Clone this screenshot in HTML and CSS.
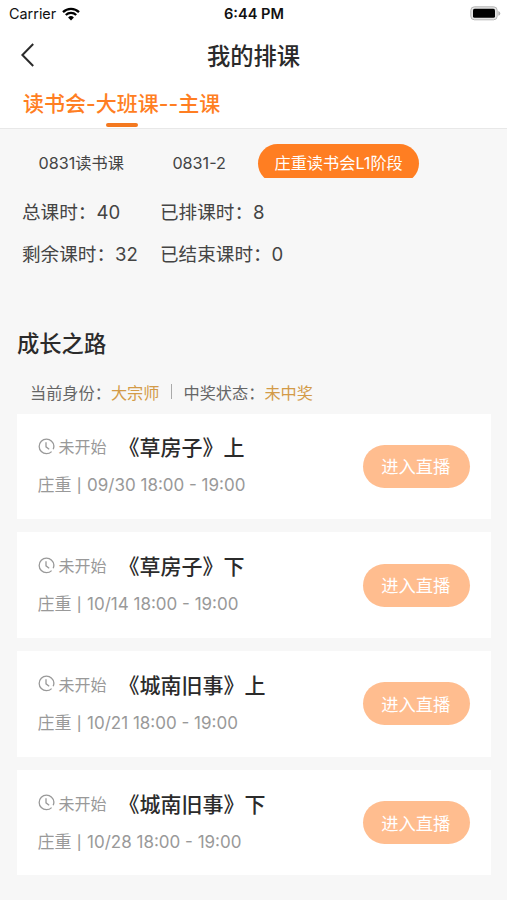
FILE: index.html
```html
<!DOCTYPE html>
<html lang="zh-CN">
<head>
    <meta charset="UTF-8">
    <meta name="viewport" content="width=device-width, initial-scale=1.0">
    <title>我的排课</title>
    <link rel="stylesheet" href="styles.css">
</head>
<body>
    <svg width="0" height="0" class="defs">
        <symbol id="clock" viewBox="0 0 17 17">
            <path d="M13.6 3.2A7.3 7.3 0 1 0 13.6 13.6M13.4 3A7.3 7.3 0 0 1 15.2 11.2M8 4.2V8.8L11.2 11.2" fill="none" stroke="currentColor" stroke-width="1.3"/>
        </symbol>
    </svg>

    <div class="status-bar">
        <div class="carrier">
            <span>Carrier</span>
            <svg width="18" height="14" viewBox="0 0 18 14">
                <path d="M1 5.1A11.5 11.5 0 0 1 17 5.1M3.8 8A7.5 7.5 0 0 1 14.2 8" fill="none" stroke="#000" stroke-width="2.3"/>
                <path d="M9 13.4L6.1 10.4A4.2 4.2 0 0 1 11.9 10.4Z"/>
            </svg>
        </div>
        <div class="time">6:44 PM</div>
        <svg class="battery" width="31" height="15" viewBox="0 0 31 15">
            <rect x="0.8" y="0.8" width="26.4" height="13" rx="3.6" fill="#e4e4e4" stroke="#b5b5b5"/>
            <rect x="3" y="2.8" width="22" height="9" rx="1.6"/>
            <path d="M28.3 5V9.8Q30.3 9 30.3 7.4T28.3 5Z" fill="#b0b0b0"/>
        </svg>
    </div>

    <div class="nav">
        <svg class="back" width="16" height="26" viewBox="0 0 16 26">
            <path d="M13.2 2L2.4 13L13.2 24" fill="none" stroke="#2b2b2b" stroke-width="2"/>
        </svg>
        <h1>我的排课</h1>
    </div>

    <div class="tabs">
        <div class="tab active">读书会-大班课--主课</div>
    </div>

    <div class="chips">
        <div class="chip">0831读书课</div>
        <div class="chip">0831-2</div>
        <div class="chip active">庄重读书会L1阶段</div>
    </div>

    <div class="stats">
        <div>总课时：40</div>
        <div>已排课时：8</div>
        <div>剩余课时：32</div>
        <div>已结束课时：0</div>
    </div>

    <h2>成长之路</h2>
    <div class="identity">
        <span>当前身份：<em>大宗师</em></span>
        <i class="divider"></i>
        <span>中奖状态：<em>未中奖</em></span>
    </div>

    <div class="list">
        <div class="card">
            <div class="info">
                <div class="row">
                    <svg class="clock"><use href="#clock"/></svg>
                    <span class="state">未开始</span>
                    <h3>《草房子》上</h3>
                </div>
                <div class="meta">庄重 <b>|</b> <span>09/30 18:00 - 19:00</span></div>
            </div>
            <button>进入直播</button>
        </div>
        <div class="card">
            <div class="info">
                <div class="row">
                    <svg class="clock"><use href="#clock"/></svg>
                    <span class="state">未开始</span>
                    <h3>《草房子》下</h3>
                </div>
                <div class="meta">庄重 <b>|</b> <span>10/14 18:00 - 19:00</span></div>
            </div>
            <button>进入直播</button>
        </div>
        <div class="card">
            <div class="info">
                <div class="row">
                    <svg class="clock"><use href="#clock"/></svg>
                    <span class="state">未开始</span>
                    <h3>《城南旧事》上</h3>
                </div>
                <div class="meta">庄重 <b>|</b> <span>10/21 18:00 - 19:00</span></div>
            </div>
            <button>进入直播</button>
        </div>
        <div class="card">
            <div class="info">
                <div class="row">
                    <svg class="clock"><use href="#clock"/></svg>
                    <span class="state">未开始</span>
                    <h3>《城南旧事》下</h3>
                </div>
                <div class="meta">庄重 <b>|</b> <span>10/28 18:00 - 19:00</span></div>
            </div>
            <button>进入直播</button>
        </div>
    </div>
</body>
</html>
```

FILE: styles.css
```css
* {
    box-sizing: border-box;
}
body {
    margin: 0;
    min-height: 900px;
    background-color: #f7f7f7;
    color: #444;
    font-family: Inter, "Noto Sans CJK SC", sans-serif;
    white-space: nowrap;
}
h1, h2, h3 {
    margin: 0;
    color: #2b2b2b;
}
.defs {
    display: block;
}

/* status bar */
.status-bar {
    display: grid;
    grid-template-columns: 1fr auto 1fr;
    align-items: center;
    height: 27px;
    padding: 0 6px 0 9px;
    background-color: #fff;
    color: #111;
    font-size: 14.4px;
}
.carrier {
    display: flex;
    align-items: center;
    gap: 6px;
}
.time {
    margin-right: 2px;
    font-size: 14.6px;
    font-weight: 600;
}
.battery {
    justify-self: end;
}

/* header */
.nav {
    display: grid;
    grid-template-columns: 1fr auto 1fr;
    align-items: center;
    height: 56px;
    padding: 0 20px;
    background-color: #fff;
}
.nav h1 {
    font-size: 23.3px;
    font-weight: 500;
}
.tabs {
    height: 46px;
    padding-left: 23px;
    background-color: #fff;
    border-bottom: 1px solid #e8e8e8;
}
.tab {
    display: flex;
    flex-direction: column;
    align-items: center;
    width: max-content;
    color: #ff7e22;
    font-size: 21px;
    font-weight: 500;
    line-height: 41px;
}
.tab.active::after {
    content: "";
    width: 32px;
    height: 4px;
    margin-top: -1px;
    border-radius: 2px;
    background-color: #f47920;
}

/* the scroller cuts the bottom of the pills */
.chips {
    display: flex;
    gap: 16.5px;
    height: 34px;
    margin-top: 14.5px;
    padding-left: 22.5px;
    overflow: hidden;
}
.chip {
    flex: none;
    height: 39px;
    padding: 0 16px;
    border-radius: 20px;
    font-size: 16.2px;
    line-height: 38px;
}
.chip.active {
    background-color: #ff7e22;
    color: #fff;
}

.stats {
    display: grid;
    grid-template-columns: 138px auto;
    margin: 13px 0 0 22px;
    font-size: 18.6px;
    line-height: 42.5px;
}

h2 {
    margin: 52.5px 0 0 17px;
    font-size: 22.3px;
    font-weight: 500;
    line-height: 32px;
}
.identity {
    display: flex;
    align-items: center;
    gap: 11.5px;
    height: 24px;
    margin: 19.5px 0 0 30px;
    color: #666;
    font-size: 16.2px;
}
.identity em {
    color: #d39b48;
    font-style: normal;
}
.divider {
    width: 1px;
    height: 15px;
    background-color: #aaa;
}

/* lessons */
.list {
    display: flex;
    flex-direction: column;
    gap: 13.3px;
    padding: 10px 16px 0 17px;
}
.card {
    display: flex;
    align-items: center;
    justify-content: space-between;
    height: 105.5px;
    padding: 0 21px 0 20.5px;
    background-color: #fff;
}
.row {
    display: flex;
    align-items: center;
    height: 38px;
}
.clock {
    width: 17px;
    height: 17px;
    margin-right: 4px;
    color: #999;
}
.state {
    margin-right: 12px;
    color: #999;
    font-size: 16px;
}
.row h3 {
    font-size: 21px;
    font-weight: 500;
}
.meta {
    padding-top: 1px;
    color: #999;
    font-size: 17px;
    line-height: 38px;
}
.meta b {
    display: inline-block;
    width: 6px;
    font-size: 14px;
    font-weight: 500;
    text-align: center;
}
button {
    width: 107.5px;
    height: 43px;
    padding: 0 1px 1px 0;
    border: none;
    border-radius: 22px;
    background-color: #ffbd8f;
    color: #fff;
    font-family: inherit;
    font-size: 17.3px;
}
```
